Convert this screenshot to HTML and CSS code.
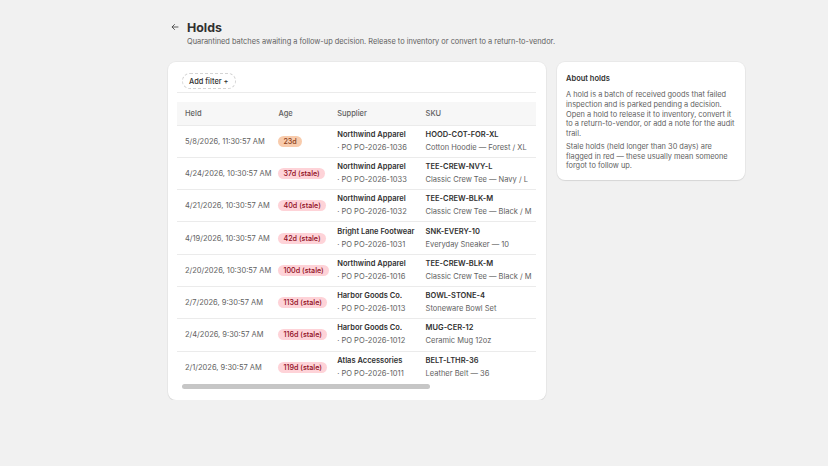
FILE: index.html
```html
<!DOCTYPE html>
<html lang="en">
<head>
    <meta charset="UTF-8">
    <meta name="viewport" content="width=device-width, initial-scale=1.0">
    <title>Holds</title>
    <link rel="stylesheet" href="styles.css">
</head>
<body>
    <div class="page">
        <header class="page-header">
            <a href="#" class="back" aria-label="Back">
                <svg width="10" height="10" viewBox="0 0 20 20"><path d="M16 10H4.5M9 5l-5 5 5 5" fill="none" stroke="#4a4a4a" stroke-width="1.8" stroke-linecap="round" stroke-linejoin="round"/></svg>
            </a>
            <div>
                <h1>Holds</h1>
                <p class="subtitle">Quarantined batches awaiting a follow-up decision. Release to inventory or convert to a return-to-vendor.</p>
            </div>
        </header>

        <div class="layout">
            <section class="card holds-card">
                <div class="filters">
                    <button class="add-filter">Add filter +</button>
                </div>
                <div class="table-scroll">
                    <table class="holds-table">
                        <thead>
                            <tr>
                                <th class="col-held">Held</th>
                                <th class="col-age">Age</th>
                                <th class="col-supplier">Supplier</th>
                                <th class="col-sku">SKU</th>
                                <th class="col-qty">Qty</th>
                                <th class="col-reason">Reason</th>
                            </tr>
                        </thead>
                        <tbody>
                            <tr>
                                <td class="muted">5/8/2026, 11:30:57 AM</td>
                                <td><span class="badge badge-warn">23d</span></td>
                                <td><strong>Northwind Apparel</strong><span class="sub">· PO PO-2026-1036</span></td>
                                <td><strong>HOOD-COT-FOR-XL</strong><span class="sub">Cotton Hoodie — Forest / XL</span></td>
                                <td>4</td>
                                <td class="muted">Stitching defect</td>
                            </tr>
                            <tr>
                                <td class="muted">4/24/2026, 10:30:57 AM</td>
                                <td><span class="badge badge-stale">37d (stale)</span></td>
                                <td><strong>Northwind Apparel</strong><span class="sub">· PO PO-2026-1033</span></td>
                                <td><strong>TEE-CREW-NVY-L</strong><span class="sub">Classic Crew Tee — Navy / L</span></td>
                                <td>3</td>
                                <td class="muted">Color mismatch</td>
                            </tr>
                            <tr>
                                <td class="muted">4/21/2026, 10:30:57 AM</td>
                                <td><span class="badge badge-stale">40d (stale)</span></td>
                                <td><strong>Northwind Apparel</strong><span class="sub">· PO PO-2026-1032</span></td>
                                <td><strong>TEE-CREW-BLK-M</strong><span class="sub">Classic Crew Tee — Black / M</span></td>
                                <td>4</td>
                                <td class="muted">Misprint</td>
                            </tr>
                            <tr>
                                <td class="muted">4/19/2026, 10:30:57 AM</td>
                                <td><span class="badge badge-stale">42d (stale)</span></td>
                                <td><strong>Bright Lane Footwear</strong><span class="sub">· PO PO-2026-1031</span></td>
                                <td><strong>SNK-EVERY-10</strong><span class="sub">Everyday Sneaker — 10</span></td>
                                <td>2</td>
                                <td class="muted">Sole separation</td>
                            </tr>
                            <tr>
                                <td class="muted">2/20/2026, 10:30:57 AM</td>
                                <td><span class="badge badge-stale">100d (stale)</span></td>
                                <td><strong>Northwind Apparel</strong><span class="sub">· PO PO-2026-1016</span></td>
                                <td><strong>TEE-CREW-BLK-M</strong><span class="sub">Classic Crew Tee — Black / M</span></td>
                                <td>4</td>
                                <td class="muted">Misprint</td>
                            </tr>
                            <tr>
                                <td class="muted">2/7/2026, 9:30:57 AM</td>
                                <td><span class="badge badge-stale">113d (stale)</span></td>
                                <td><strong>Harbor Goods Co.</strong><span class="sub">· PO PO-2026-1013</span></td>
                                <td><strong>BOWL-STONE-4</strong><span class="sub">Stoneware Bowl Set</span></td>
                                <td>5</td>
                                <td class="muted">Chipped</td>
                            </tr>
                            <tr>
                                <td class="muted">2/4/2026, 9:30:57 AM</td>
                                <td><span class="badge badge-stale">116d (stale)</span></td>
                                <td><strong>Harbor Goods Co.</strong><span class="sub">· PO PO-2026-1012</span></td>
                                <td><strong>MUG-CER-12</strong><span class="sub">Ceramic Mug 12oz</span></td>
                                <td>4</td>
                                <td class="muted">Cracked glaze</td>
                            </tr>
                            <tr>
                                <td class="muted">2/1/2026, 9:30:57 AM</td>
                                <td><span class="badge badge-stale">119d (stale)</span></td>
                                <td><strong>Atlas Accessories</strong><span class="sub">· PO PO-2026-1011</span></td>
                                <td><strong>BELT-LTHR-36</strong><span class="sub">Leather Belt — 36</span></td>
                                <td>6</td>
                                <td class="muted">Wrong size</td>
                            </tr>
                        </tbody>
                    </table>
                </div>
                <div class="scrollbar"><div class="scrollbar-thumb"></div></div>
            </section>

            <aside class="card about-card">
                <h2>About holds</h2>
                <p>A hold is a batch of received goods that failed inspection and is parked pending a decision. Open a hold to release it to inventory, convert it to a return-to-vendor, or add a note for the audit trail.</p>
                <p>Stale holds (held longer than 30 days) are flagged in red — these usually mean someone forgot to follow up.</p>
            </aside>
        </div>
    </div>
</body>
</html>
```

FILE: styles.css
```css
* {
    box-sizing: border-box;
}

body {
    margin: 0;
    background-color: #f1f1f1;
    color: #303030;
    font-family: Inter, "Noto Sans", sans-serif;
}

.page {
    width: 577px;
    margin-left: 168px;
    padding-top: 19px;
}

/* header */
.page-header {
    display: flex;
    align-items: flex-start;
    gap: 7px;
    margin-bottom: 15px;
}

.back {
    display: flex;
    margin-top: 3px;
    margin-left: 2px;
}

.page-header h1 {
    margin: 0;
    font-size: 12.4px;
    line-height: 18px;
    font-weight: 700;
    color: #303030;
}

.subtitle {
    margin: 0;
    font-size: 7.4px;
    line-height: 10px;
    color: #616161;
}

/* layout */
.layout {
    display: grid;
    grid-template-columns: 378px 188px;
    gap: 11px;
    align-items: start;
}

.card {
    background: #fff;
    border-radius: 8px;
    box-shadow: 0 1px 1px rgba(0, 0, 0, 0.08), 0 0 0 1px rgba(0, 0, 0, 0.03);
}

.holds-card {
    padding: 11px 10px 11px 9px;
}

.filters {
    display: flex;
    padding: 0 0 3px 5px;
    border-bottom: 1px solid #ebebeb;
    margin-bottom: 9px;
}

.add-filter {
    height: 16px;
    padding: 0 6px;
    border: 1px dashed #d4d4d4;
    border-radius: 8px;
    background: #fff;
    color: #303030;
    font-family: inherit;
    font-size: 7.4px;
    font-weight: 500;
}

/* table */
.table-scroll {
    overflow: hidden;
}

.holds-table {
    width: 505px;
    border-collapse: collapse;
    white-space: nowrap;
    font-size: 7.5px;
}

.holds-table th {
    height: 23px;
    padding: 0 3px 0 4px;
    background: #f7f7f7;
    color: #616161;
    font-weight: 500;
    text-align: left;
}

.holds-table td {
    height: 32.3px;
    padding: 0 3px 0 4px;
    border-top: 1px solid #ebebeb;
    color: #303030;
}

.holds-table th:first-child,
.holds-table td:first-child {
    padding-left: 8px;
}

.col-held { width: 92px; }
.col-age { width: 59px; }
.col-supplier { width: 89px; }
.col-sku { width: 108px; }
.col-qty { width: 40px; }
.col-reason { width: 117px; }

.holds-table .muted {
    color: #616161;
}

.holds-table strong {
    display: block;
    font-weight: 600;
    line-height: 12px;
}

.holds-table .sub {
    display: block;
    margin-top: 1px;
    color: #616161;
    line-height: 12px;
}

.badge {
    display: inline-block;
    padding: 0 5px;
    border-radius: 6px;
    font-size: 7.2px;
    line-height: 11px;
    font-weight: 500;
}

.badge-warn {
    background: #f8cbac;
    color: #8a3d1a;
}

.badge-stale {
    background: #fed3d8;
    color: #8e0b21;
}

/* fake horizontal scrollbar under the table */
.scrollbar {
    height: 5px;
    margin: 1px 5px 0;
}

.scrollbar-thumb {
    width: 248px;
    height: 5px;
    border-radius: 3px;
    background: #c6c6c6;
}

/* sidebar */
.about-card {
    padding: 12px 9px 9px;
}

.about-card h2 {
    margin: 0 0 6px;
    font-size: 7.5px;
    line-height: 10px;
    font-weight: 600;
}

.about-card p {
    margin: 0 0 3px;
    font-size: 7.4px;
    line-height: 9.75px;
    color: #616161;
}

.about-card p:last-child {
    margin-bottom: 0;
}
```
